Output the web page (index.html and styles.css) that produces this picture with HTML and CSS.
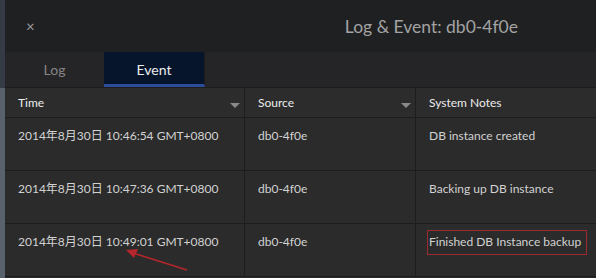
FILE: index.html
```html
<!DOCTYPE html>
<html lang="en">
<head>
    <meta charset="UTF-8">
    <title>Log &amp; Event: db0-4f0e</title>
    <link rel="stylesheet" href="styles.css">
</head>
<body>
    <div class="page">
        <div class="side-strip"></div>

        <div class="panel">
            <!-- Panel header -->
            <div class="panel-header">
                <span class="close-btn">&times;</span>
                <span class="panel-title">Log &amp; Event: db0-4f0e</span>
            </div>

            <!-- Tabs -->
            <div class="tabs">
                <div class="tab">Log</div>
                <div class="tab active">Event</div>
            </div>

            <!-- Event table -->
            <div class="table">
                <div class="row head">
                    <div class="cell col-time">Time<span class="caret"></span></div>
                    <div class="cell col-source">Source<span class="caret"></span></div>
                    <div class="cell col-notes">System Notes</div>
                </div>
                <div class="row">
                    <div class="cell col-time"><span class="clip">2014年8月30日 10:46:54 GMT+0800 (China Standard Time)</span></div>
                    <div class="cell col-source">db0-4f0e</div>
                    <div class="cell col-notes">DB instance created</div>
                </div>
                <div class="row">
                    <div class="cell col-time"><span class="clip">2014年8月30日 10:47:36 GMT+0800 (China Standard Time)</span></div>
                    <div class="cell col-source">db0-4f0e</div>
                    <div class="cell col-notes">Backing up DB instance</div>
                </div>
                <div class="row marked">
                    <div class="cell col-time"><span class="clip">2014年8月30日 10:49:01 GMT+0800 (China Standard Time)</span></div>
                    <div class="cell col-source">db0-4f0e</div>
                    <div class="cell col-notes"><span class="highlight">Finished DB Instance backup</span></div>
                    <!-- annotation arrow -->
                    <svg class="arrow" width="70" height="30" viewBox="0 0 70 30">
                        <line x1="64" y1="24" x2="10" y2="7" stroke="#b3262b" stroke-width="1.6"/>
                        <polygon points="3,4 15,3 11,12" fill="#b3262b"/>
                    </svg>
                </div>
            </div>
        </div>
    </div>
</body>
</html>
```

FILE: styles.css
```css
body {
    margin: 0;
    background-color: #2b2b2b;
    font-family: Lato, "Noto Sans CJK SC", sans-serif;
}

.page {
    display: flex;
    width: 596px;
    height: 278px;
    overflow: hidden;
}

.side-strip {
    width: 5px;
    flex-shrink: 0;
    background: linear-gradient(to bottom, #343b44 0, #343b44 88px, #59626c 88px);
}

.panel {
    flex: 1;
    display: flex;
    flex-direction: column;
    min-width: 0;
}

.panel-header {
    display: flex;
    align-items: center;
    height: 52px;
    background-color: #1f2022;
    padding: 0 78px 0 21px;
}

.close-btn {
    color: #9a9a9a;
    font-size: 15px;
}

.panel-title {
    margin-left: auto;
    color: #a3a3a3;
    font-size: 17.5px;
}

.tabs {
    display: flex;
    height: 35px;
    background-color: #252527;
    border-bottom: 1px solid #1c1c1c;
}

.tab {
    width: 99px;
    display: flex;
    align-items: center;
    justify-content: center;
    color: #858585;
    font-size: 14px;
    border-bottom: 3px solid transparent;
    padding-top: 2px;
}

.tab.active {
    width: 100px;
    background-color: #07152c;
    color: #ececec;
    border-bottom-color: #2d4c9c;
    border-right: 1px solid #1c1c1c;
}

.row {
    display: flex;
    height: 52px;
    border-bottom: 1px solid #1d1d1d;
    background-color: #2b2b2b;
    font-size: 12px;
    color: #d2d2d2;
}

.row.head {
    height: 29px;
    background-color: #2c2c2d;
    color: #ececec;
}

.cell {
    position: relative;
    min-width: 0;
    flex-shrink: 0;
    padding: 9px 0 0 13px;
    line-height: 18px;
    border-right: 1px solid #1d1d1d;
    white-space: nowrap;
}

.head .cell {
    padding-top: 6px;
}

.col-time { width: 226px; }
.col-source { width: 157px; }
.col-notes { flex: 1 1 0; border-right: none; }

.clip {
    display: block;
    width: 202px;
    overflow: hidden;
}

.caret {
    position: absolute;
    right: 4px;
    top: 15px;
    border-left: 5px solid transparent;
    border-right: 5px solid transparent;
    border-top: 5px solid #8a8a8a;
}

.highlight {
    display: inline-block;
    margin: -3px 0 0 -2px;
    padding: 2px 5px 3px 1px;
    border: 1px solid #9c2b2f;
}

.marked {
    position: relative;
}

.arrow {
    position: absolute;
    left: 118px;
    top: 22px;
}
```
